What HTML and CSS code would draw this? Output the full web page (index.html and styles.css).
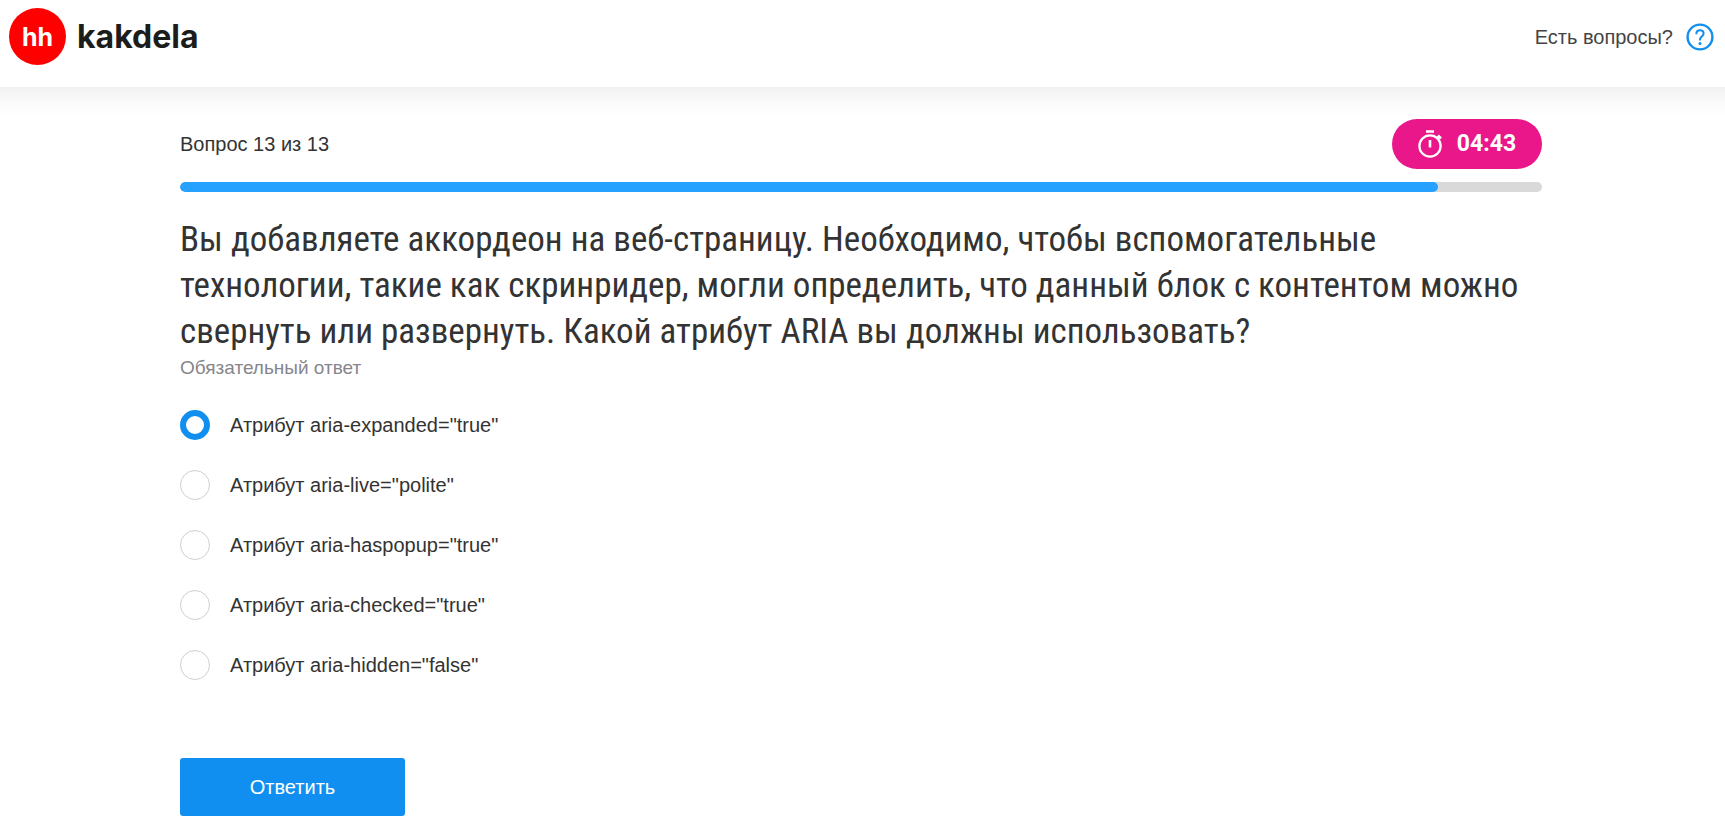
FILE: index.html
```html
<!DOCTYPE html>
<html lang="ru">
<head>
<meta charset="utf-8">
<meta name="viewport" content="width=device-width, initial-scale=1">
<title>kakdela</title>
<link rel="stylesheet" href="styles.css">
</head>
<body>
<header class="header">
  <a class="logo" href="#"><span class="logo-mark">hh</span><span class="logo-name">kakdela</span></a>
  <a class="help" href="#">
    <span>Есть вопросы?</span>
    <svg class="help-icon" viewBox="0 0 28 28" fill="none" stroke="#118ff0" aria-hidden="true">
      <circle cx="14" cy="14" r="12.4" stroke-width="2.4"/>
      <path d="M10.300 11.200c0-2.500 1.500-4 3.700-4 2.200 0 3.600 1.300 3.600 3.300 0 2.900-3.600 3.200-3.600 6v1" stroke-width="2"/>
      <circle cx="14" cy="20.600" r="1.500" fill="#118ff0" stroke="none"/>
    </svg>
  </a>
</header>
<main class="survey">
  <div class="status">
    <span>Вопрос 13 из 13</span>
    <div class="timer">
      <svg class="timer-icon" viewBox="0 0 24 28" fill="none" stroke="#fff" aria-hidden="true">
        <circle cx="12" cy="16" r="10.600" stroke-width="2.300"/>
        <path d="M8 1.500h8M12 10v7.500" stroke-width="2.600"/>
        <path d="M18.800 8.500l1.800-1.800M20 5.500l3 3" stroke-width="2.600"/>
      </svg>
      <span>04:43</span>
    </div>
  </div>
  <div class="progress" role="progressbar" aria-label="Прогресс" aria-valuemin="0" aria-valuemax="13" aria-valuenow="12">
    <div class="progress-fill" style="width: 92.4%"></div>
  </div>
  <form>
    <h1 class="question" id="question">Вы добавляете аккордеон на веб-страницу. Необходимо, чтобы вспомогательные технологии, такие как скринридер, могли определить, что данный блок с контентом можно свернуть или развернуть. Какой атрибут ARIA вы должны использовать?</h1>
    <p class="hint">Обязательный ответ</p>
    <div class="options" role="radiogroup" aria-labelledby="question">
      <label class="option"><input class="radio" type="radio" name="answer" checked><span>Атрибут aria-expanded="true"</span></label>
      <label class="option"><input class="radio" type="radio" name="answer"><span>Атрибут aria-live="polite"</span></label>
      <label class="option"><input class="radio" type="radio" name="answer"><span>Атрибут aria-haspopup="true"</span></label>
      <label class="option"><input class="radio" type="radio" name="answer"><span>Атрибут aria-checked="true"</span></label>
      <label class="option"><input class="radio" type="radio" name="answer"><span>Атрибут aria-hidden="false"</span></label>
    </div>
    <button class="submit" type="submit">Ответить</button>
  </form>
</main>
</body>
</html>
```
FILE: styles.css
```css
* {
  box-sizing: border-box;
}

body {
  margin: 0;
  background: #fff;
  color: #333;
  font: 20px/30px "Liberation Sans", Arial, sans-serif;
}

.header {
  display: flex;
  align-items: flex-start;
  justify-content: space-between;
  height: 87px;
  padding: 8px 11px 0 9px;
}

.logo {
  display: flex;
  align-items: center;
  gap: 11px;
  color: #1c1c1c;
  font-family: Inter, sans-serif;
  font-weight: 700;
  text-decoration: none;
}

.logo-mark {
  display: flex;
  align-items: center;
  justify-content: center;
  width: 57px;
  height: 57px;
  border-radius: 50%;
  background: #f00;
  color: #fff;
  font-size: 25px;
}

.logo-name {
  font-size: 32px;
}

.help {
  display: flex;
  align-items: center;
  gap: 13px;
  padding-top: 14px;
  color: #444;
  text-decoration: none;
}

.help-icon {
  width: 28px;
  height: 28px;
}

.survey {
  padding: 32px 183px 6px 180px;
  background: linear-gradient(#f2f2f2, #fafafa 15px, #fff 30px);
}

.status {
  display: flex;
  align-items: center;
  justify-content: space-between;
}

.timer {
  display: flex;
  align-items: center;
  justify-content: center;
  gap: 15px;
  width: 150px;
  height: 50px;
  border-radius: 25px;
  background: #e9178a;
  color: #fff;
  font: 700 23px/30px Roboto, sans-serif;
}

.timer-icon {
  width: 24px;
  height: 28px;
}

.progress {
  height: 10px;
  margin-top: 13px;
  overflow: hidden;
  border-radius: 5px;
  background: #d9d9d9;
}

.progress-fill {
  height: 100%;
  border-radius: 5px;
  background: #26a1ff;
}

.question {
  margin: 25px 0 0;
  font: 400 35px/46px "Roboto Condensed", "Liberation Sans Narrow", sans-serif;
}

.hint {
  margin: 0;
  color: #86868c;
  font-size: 19px;
  line-height: 25px;
}

.options {
  display: grid;
  gap: 30px;
  margin-top: 30px;
}

.option {
  display: flex;
  align-items: center;
  gap: 20px;
}

.radio {
  flex: none;
  width: 30px;
  height: 30px;
  margin: 0;
  appearance: none;
  border: 1px solid #cdd0d3;
  border-radius: 50%;
  background: #fff;
}

.radio:checked {
  border: 6px solid #118ff0;
}

.submit {
  width: 225px;
  height: 58px;
  margin-top: 78px;
  border: 0;
  border-radius: 3px;
  background: #118ff0;
  color: #fff;
  font: inherit;
}
```
